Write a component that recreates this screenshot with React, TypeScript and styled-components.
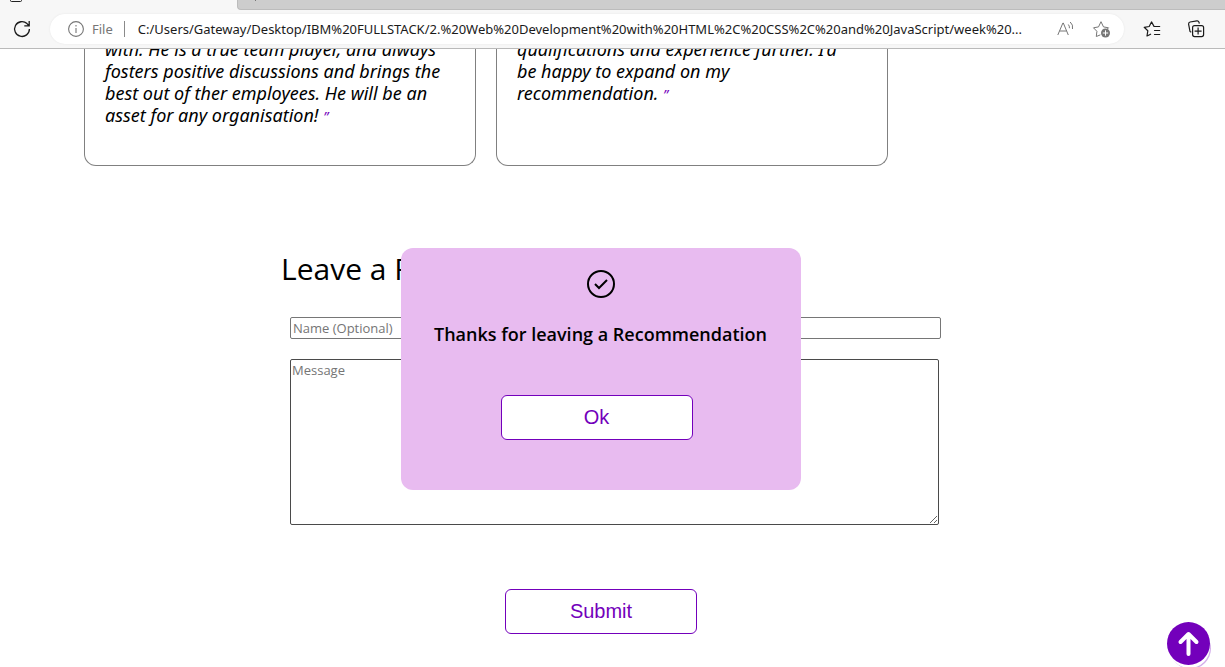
import React from "react";
import styled, { createGlobalStyle } from "styled-components";

const ACCENT = "#7300bb";
const SITE_FONT = `"Trebuchet MS", "Open Sans", sans-serif`;
const QUOTE_FONT = `"Trebuchet MS", "Noto Sans", sans-serif`;
const CHROME_FONT = `"Segoe UI", "Noto Sans", sans-serif`;

const GlobalStyle = createGlobalStyle`
  *, *::before, *::after { box-sizing: border-box; }
  body { margin: 0; background: #fff; color: #000; font-family: ${SITE_FONT}; }
`;

const Browser = styled.div`
  display: flex;
  flex-direction: column;
  height: 100vh;
  overflow: hidden;
`;

const Chrome = styled.header`
  position: relative;
  z-index: 1;
  flex: none;
  background: #f7f7f7;
  border-bottom: 1px solid #bababa;
  font-family: ${CHROME_FONT};
`;

const TabStrip = styled.div`
  display: flex;
  height: 10px;
`;

const ActiveTab = styled.div`
  width: 237px;
  padding-left: 10px;
  svg { display: block; }
`;

const OtherTabs = styled.div`
  flex: 1;
  padding-left: 17px;
  background: #cdcdcd;
  border-left: 1px solid #bcbcbc;
  border-bottom: 1px solid #bcbcbc;
  border-bottom-left-radius: 4px;
  svg { display: block; }
`;

const Toolbar = styled.div`
  display: flex;
  align-items: center;
  height: 38px;
  padding: 0 18px 0 12px;
`;

const IconButton = styled.button<{ $tone?: string }>`
  display: flex;
  flex: none;
  align-items: center;
  justify-content: center;
  width: 20px;
  height: 20px;
  padding: 0;
  border: 0;
  background: none;
  color: ${(p) => p.$tone ?? "#1a1a1a"};
`;

const AddressBar = styled.div`
  display: flex;
  flex: 1;
  align-items: center;
  min-width: 0;
  height: 30px;
  margin: 0 19px 0 18px;
  padding: 0 12px 0 16px;
  border-radius: 15px;
  background: #fff;
  box-shadow: 0 0 2px #e4e4e4;
`;

const Scheme = styled.span`
  margin-left: 6px;
  padding-right: 11px;
  border-right: 1px solid #8a8a8a;
  color: #767676;
  font-size: 13px;
  line-height: 16px;
`;

const Address = styled.input`
  flex: 1;
  min-width: 0;
  height: 24px;
  margin: 0 12px 0 13px;
  padding: 0;
  border: 0;
  outline: 0;
  background: none;
  color: #1a1a1a;
  font: 13px ${CHROME_FONT};
`;

const BarActions = styled.div`
  display: flex;
  gap: 16px;
`;

const ToolActions = styled.div`
  display: flex;
  gap: 24px;
`;

const Page = styled.main`
  flex: 1;
  min-height: 0;
`;

const Cards = styled.section`
  display: flex;
  gap: 20px;
  margin-top: -11px;
  padding-left: 84px;
`;

const Card = styled.blockquote`
  width: 392px;
  height: 128px;
  margin: 0;
  padding: 0 20px;
  border: 1px solid #808080;
  border-top: 0;
  border-radius: 0 0 12px 12px;
  font-family: ${QUOTE_FONT};
  font-size: 18px;
  font-style: italic;
  line-height: 22px;
  white-space: nowrap;
`;

const QuoteMark = styled.span`
  color: ${ACCENT};
  font-size: 14px;
  line-height: 1;
`;

const Form = styled.form`
  display: flex;
  flex-direction: column;
  width: 640px;
  margin: 82px auto 0;
`;

const FormArea = styled.div`
  padding-right: 23px;
`;

const Title = styled.h2`
  margin: 0 0 27px;
  font-size: 30px;
  font-weight: 400;
  line-height: 42px;
`;

const Fields = styled.div`
  display: flex;
  flex-direction: column;
  gap: 20px;
  margin: 0 -20px 64px 9px;
`;

const NameInput = styled.input`
  width: 651px;
  height: 22px;
  padding: 1px 2px;
  border: 1px solid #767676;
  border-radius: 2px;
  font: 13px ${SITE_FONT};
  &::placeholder { color: #757575; }
`;

const MessageInput = styled.textarea`
  width: 649px;
  height: 166px;
  padding: 1px;
  border: 1px solid #4a4a4a;
  border-radius: 2px;
  font: 13px ${SITE_FONT};
  &::placeholder { color: #757575; }
`;

const ActionButton = styled.button`
  width: 192px;
  height: 45px;
  align-self: center;
  padding: 0;
  border: 1px solid ${ACCENT};
  border-radius: 6px;
  background: #fff;
  color: ${ACCENT};
  font: 20px "Liberation Sans", Arial, sans-serif;
`;

const Popup = styled.div`
  position: fixed;
  top: 248px;
  left: calc(50% - 212px);
  display: flex;
  flex-direction: column;
  align-items: center;
  width: 400px;
  height: 242px;
  padding: 20px 8px 0 0;
  border-radius: 12px;
  background: #e8bbf0;
`;

const PopupHead = styled.div`
  display: flex;
  flex-direction: column;
  align-items: center;
  gap: 21px;
  margin: 0 -8px 48px 0;
`;

const PopupText = styled.h3`
  margin: 0;
  font-size: 18px;
  font-weight: 600;
  line-height: 26px;
  white-space: nowrap;
`;

const ToTop = styled.a`
  position: fixed;
  right: 15px;
  bottom: 2px;
  display: flex;
  align-items: center;
  justify-content: center;
  width: 43px;
  height: 43px;
  border-radius: 50%;
  background: ${ACCENT};
  box-shadow: 1px 4px 0 -1px #fff, 2px 5px 0 -1px #d3aeea;
`;

const Star = ({ badge }: { badge?: boolean }) => (
  <svg width="20" height="20" viewBox="0 0 20 20" fill="none" stroke="currentColor" strokeLinejoin="round" strokeLinecap="round" aria-hidden="true">
    {badge ? (
      <>
        <path d="M8 16 4.3 17.5l.6-5.2L1.5 8.8l5-.9L9 2.7l2.5 5.2 5 .9-1.3 1.3" />
        <circle cx="13.5" cy="14" r="4.5" fill="currentColor" stroke="none" />
        <path d="M13.5 11.7v4.6M11.2 14h4.6" stroke="#fff" />
      </>
    ) : (
      <path d="M11 7.4 8.5 2.9 6.2 7.5l-5 .8 3.6 3.5-.8 5.2 3.6-1.8M11.5 7.5h5.2M11.5 11.5h5.2M11.5 15.5h5.2" strokeWidth="1.2" />
    )}
  </svg>
);

export default function App() {
  return (
    <Browser>
      <GlobalStyle />
      <Chrome>
        <TabStrip>
          <ActiveTab>
            <svg width="12" height="3" viewBox="0 0 12 3" fill="none" stroke="#222" aria-hidden="true">
              <path d="M.5 0v.5a1 1 0 0 0 1 1h9a1 1 0 0 0 1-1V0" />
            </svg>
          </ActiveTab>
          <OtherTabs>
            <svg width="2" height="1" aria-hidden="true"><path d="M0 0h1v1H0z" fill="#777" /></svg>
          </OtherTabs>
        </TabStrip>
        <Toolbar>
          <IconButton aria-label="Refresh">
            <svg width="20" height="20" viewBox="0 0 20 20" fill="none" stroke="currentColor" strokeWidth="1.3" aria-hidden="true">
              <path d="M17.4 10A7.4 7.4 0 1 1 15 4.6L17 6.7M17.2 2v4.8h-4.9" />
            </svg>
          </IconButton>
          <AddressBar>
            <IconButton aria-label="View site information" $tone="#767676">
              <svg width="20" height="20" viewBox="0 0 20 20" fill="none" stroke="currentColor" strokeWidth="1.1" aria-hidden="true">
                <circle cx="10" cy="10" r="7.4" />
                <path d="M10 9v5M10 6v1.4" />
              </svg>
            </IconButton>
            <Scheme>File</Scheme>
            <Address
              aria-label="Address"
              readOnly
              value="C:/Users/Gateway/Desktop/IBM%20FULLSTACK/2.%20Web%20Development%20with%20HTML%2C%20CSS%2C%20and%20JavaScript/week%20..."
            />
            <BarActions>
              <IconButton aria-label="Read aloud" $tone="#767676">
                <svg width="20" height="20" viewBox="0 0 20 20" fill="none" stroke="currentColor" aria-hidden="true">
                  <path d="M1.8 16 6.9 4h.4l5 12M3.6 12h6.9M12.3 5.5q1.4 1.5 1.1 3.7M14.2 3q3.2 2.8 2.3 7" />
                </svg>
              </IconButton>
              <IconButton aria-label="Add to favorites" $tone="#767676"><Star badge /></IconButton>
            </BarActions>
          </AddressBar>
          <ToolActions>
            <IconButton aria-label="Favorites"><Star /></IconButton>
            <IconButton aria-label="Collections">
              <svg width="20" height="20" viewBox="0 0 20 20" fill="none" stroke="currentColor" strokeWidth="1.2" aria-hidden="true">
                <path d="M4.3 13.3 3 12.5 1.6 5.2Q1.4 3.5 3.1 3L9.9 1.9q1.5-.2 2.1 1.3l.3 1.5" />
                <rect x="5.6" y="6.6" width="11" height="11" rx="2" />
                <path d="M11.1 8.6v7M7.6 12.1h7" />
              </svg>
            </IconButton>
          </ToolActions>
        </Toolbar>
      </Chrome>
      <Page>
        <Cards>
          <Card>
            with. He is a true team player, and always<br />
            fosters positive discussions and brings the<br />
            best out of ther employees. He will be an<br />
            asset for any organisation! <QuoteMark>”</QuoteMark>
          </Card>
          <Card>
            qualifications and experience further. I’d<br />
            be happy to expand on my<br />
            recommendation. <QuoteMark>”</QuoteMark>
          </Card>
        </Cards>
        <FormArea>
          <Form onSubmit={(e) => e.preventDefault()}>
            <Title>Leave a Recommendation</Title>
            <Fields>
              <NameInput aria-label="Name" placeholder="Name (Optional)" />
              <MessageInput aria-label="Message" placeholder="Message" />
            </Fields>
            <ActionButton type="submit">Submit</ActionButton>
          </Form>
        </FormArea>
      </Page>
      <Popup role="dialog" aria-labelledby="thanks">
        <PopupHead>
          <svg width="32" height="32" viewBox="0 0 32 32" fill="none" stroke="#000" strokeWidth="2" aria-hidden="true">
            <circle cx="16" cy="16" r="13" />
            <path d="m10 16 4 4 8-8" />
          </svg>
          <PopupText id="thanks">Thanks for leaving a Recommendation</PopupText>
        </PopupHead>
        <ActionButton type="button">Ok</ActionButton>
      </Popup>
      <ToTop href="#" aria-label="Back to top">
        <svg width="27" height="27" viewBox="0 0 27 27" fill="none" stroke="#fff" strokeWidth="4" strokeLinecap="round" strokeLinejoin="round" aria-hidden="true">
          <path d="M13.5 24V4M5.5 12l8-8 8 8" />
        </svg>
      </ToTop>
    </Browser>
  );
}
